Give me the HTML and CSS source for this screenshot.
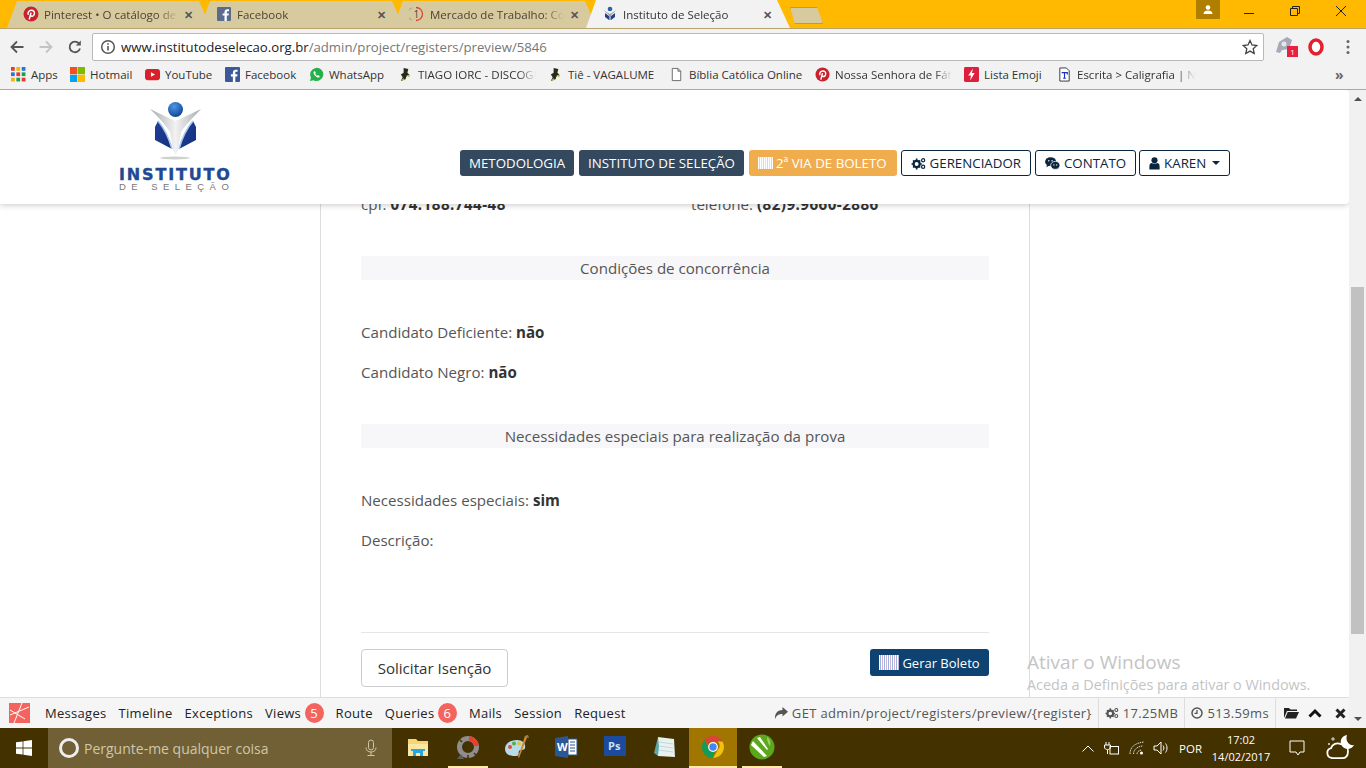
FILE: index.html
```html
<!DOCTYPE html>
<html lang="pt">
<head>
<meta charset="utf-8">
<title>Instituto de Seleção</title>
<link rel="stylesheet" href="styles.css">
</head>
<body>
<div class="tabstrip">
  <div class="tab">
    <svg class="fav" viewBox="0 0 16 16"><circle cx="8" cy="8" r="7.5" fill="#c8232c"/><path d="M6.2 13.5 8 6.6M5.3 8.7C4.4 6.4 6 4.2 8.3 4.2c2.200 0 3.400 1.500 3.100 3.400-.3 1.900-1.700 2.900-3 2.500-.7-.2-1-.7-1.100-1.100" fill="none" stroke="#fff" stroke-width="1.500"/></svg>
    <span class="tab-title">Pinterest • O catálogo de ideias</span><span class="tab-x">✕</span>
  </div>
  <div class="tab">
    <svg class="fav" viewBox="0 0 16 16"><rect x="1" y="1" width="14" height="14" rx="1" fill="#5c6a8c"/><path d="M10.800 15V9.600h1.800l.3-2.100h-2.100V6.200c0-.6.2-1 1-1h1.200V3.300c-.2 0-.9-.1-1.700-.1-1.700 0-2.800 1-2.800 2.900v1.400H6.600v2.100h1.900V15z" fill="#fff"/></svg>
    <span class="tab-title">Facebook</span><span class="tab-x">✕</span>
  </div>
  <div class="tab">
    <svg class="fav" viewBox="0 0 16 16"><path d="M7 1.500a6.500 6.500 0 0 1 0 13" fill="none" stroke="#d9472b" stroke-width="1.300"/><path d="M3 1.800A6.500 6.500 0 0 0 3 14" fill="none" stroke="#b9ac85" stroke-width="1.300"/><text x="4.500" y="12" class="fav-num">1</text></svg>
    <span class="tab-title">Mercado de Trabalho: Concursos</span><span class="tab-x">✕</span>
  </div>
  <div class="tab tab-active">
    <svg class="fav" viewBox="0 0 16 16"><circle cx="8" cy="3" r="2.300" fill="#2a62a8"/><path d="M1.500 4 8 8l6.500-4L9 9v5H7V9z" fill="#9aa0a8"/><path d="M3 7l4 3v4L3 11zM13 7l-4 3v4l4-3z" fill="#24408f"/></svg>
    <span class="tab-title">Instituto de Seleção</span><span class="tab-x">✕</span>
  </div>
  <div class="newtab"></div>
  <div class="winctl">
    <div class="profile"><svg viewBox="0 0 12 12" width="12" height="12"><circle cx="6" cy="3.500" r="2.300" fill="#fff"/><path d="M1.500 10c0-2.500 2-3.500 4.500-3.500s4.500 1 4.500 3.500z" fill="#fff"/></svg></div>
    <svg class="wc wc-min" viewBox="0 0 46 20"><path d="M18 13.500h10" stroke="#222" fill="none"/></svg>
    <svg class="wc" viewBox="0 0 46 20"><path d="M18.500 8.500h7v7h-7zM20.500 8.500v-2h7v7h-2" stroke="#222" fill="none"/></svg>
    <svg class="wc" viewBox="0 0 46 20"><path d="M18 6l10 10M28 6 18 16" stroke="#222" fill="none"/></svg>
  </div>
</div>

<div class="toolbar">
  <svg class="tool" viewBox="0 0 16 16"><path d="M14.500 8H2.500M8 2.500 2.500 8 8 13.500" fill="none" stroke="#555" stroke-width="1.800"/></svg>
  <svg class="tool" viewBox="0 0 16 16"><path d="M1.500 8h12M8 2.500 13.500 8 8 13.500" fill="none" stroke="#c4c4c4" stroke-width="1.800"/></svg>
  <svg class="tool" viewBox="0 0 16 16"><path d="M13 9.500A5.300 5.300 0 1 1 12 4.500" fill="none" stroke="#555" stroke-width="1.800"/><path d="M13.800 1.500v5h-5z" fill="#555"/></svg>
  <div class="omnibox">
    <svg class="info" viewBox="0 0 16 16"><circle cx="8" cy="8" r="6.300" fill="none" stroke="#555" stroke-width="1.500"/><path d="M8 7v4.500M8 4.300v1.500" stroke="#555" stroke-width="1.600"/></svg>
    <span class="url">www.institutodeselecao.org.br<span class="url-path">/admin/project/registers/preview/5846</span></span>
    <svg class="star" viewBox="0 0 16 16"><path d="M8 1.500l2 4.500 4.800.5-3.600 3.200 1 4.800L8 12.100l-4.200 2.400 1-4.800L1.200 6.500 6 6z" fill="none" stroke="#444" stroke-width="1.300"/></svg>
  </div>
  <div class="ext">
    <svg class="ext-icon" viewBox="0 0 18 18"><path d="M1 16 4 6l8-5 5 3-3 9-7 1-2 3z" fill="#a5a9b8"/><circle cx="9" cy="8" r="2.500" fill="#e6e6ea"/></svg>
    <span class="ext-badge">1</span>
  </div>
  <svg class="opera" viewBox="0 0 16 18"><ellipse cx="8" cy="9" rx="6" ry="7" fill="#fff" stroke="#e3202e" stroke-width="3.500"/></svg>
  <svg class="dots" viewBox="0 0 4 16"><circle cx="2" cy="2.500" r="1.500" fill="#666"/><circle cx="2" cy="8" r="1.500" fill="#666"/><circle cx="2" cy="13.500" r="1.500" fill="#666"/></svg>
</div>

<div class="bookmarks">
  <div class="bm"><svg class="bm-i" viewBox="0 0 14 14"><g><rect width="3.500" height="3.500" fill="#e33b2e"/><rect x="5" width="3.500" height="3.500" fill="#f5b400"/><rect x="10" width="3.500" height="3.500" fill="#2a75d8"/><rect y="5" width="3.500" height="3.500" fill="#2a75d8"/><rect x="5" y="5" width="3.500" height="3.500" fill="#e33b2e"/><rect x="10" y="5" width="3.500" height="3.500" fill="#1e9e50"/><rect y="10" width="3.500" height="3.500" fill="#f5b400"/><rect x="5" y="10" width="3.500" height="3.500" fill="#1e9e50"/><rect x="10" y="10" width="3.500" height="3.500" fill="#e33b2e"/></g></svg><span>Apps</span></div>
  <div class="bm"><svg class="bm-i" viewBox="0 0 16 16"><rect width="7.700" height="7.700" fill="#f25022"/><rect x="8.300" width="7.700" height="7.700" fill="#7fba00"/><rect y="8.300" width="7.700" height="7.700" fill="#00a4ef"/><rect x="8.300" y="8.300" width="7.700" height="7.700" fill="#ffb900"/></svg><span>Hotmail</span></div>
  <div class="bm"><svg class="bm-i" viewBox="0 0 16 16"><rect y="2" width="16" height="12" rx="3" fill="#d9202a"/><path d="M6.300 5.500v5l4.400-2.500z" fill="#fff"/></svg><span>YouTube</span></div>
  <div class="bm"><svg class="bm-i" viewBox="0 0 16 16"><rect width="16" height="16" rx="1" fill="#3b5998"/><path d="M11 16v-6h2l.3-2.400H11V6.200c0-.7.2-1.100 1.100-1.100h1.300V3c-.2 0-1-.1-1.900-.1-1.900 0-3.100 1.100-3.100 3.200v1.500H6.300V10h2.100v6z" fill="#fff"/></svg><span>Facebook</span></div>
  <div class="bm"><svg class="bm-i" viewBox="0 0 16 16"><path d="M1 15l1.100-3.800A7 7 0 1 1 4.900 14z" fill="#25b14a"/><path d="M5.500 4.500c-1 1 -.8 2.700.8 4.500s3.500 2.800 4.700 1.800l.5-1-2-1.200-.8.700c-.8-.3-1.700-1.200-2.100-2.100l.7-.8-1-2z" fill="#fff"/></svg><span>WhatsApp</span></div>
  <div class="bm bm-cut"><svg class="bm-i" viewBox="0 0 16 16"><path d="M6 1l5 1-1 4 2 2-3 2-1 3-5 2 2-4-2-3 3-2z" fill="#2a2a18"/><path d="M3 14l3-2 1 2z" fill="#b7c21f"/><path d="M9 9l4-1-1 3z" fill="#b7c21f"/></svg><span>TIAGO IORC - DISCOGRAFIA</span></div>
  <div class="bm"><svg class="bm-i" viewBox="0 0 16 16"><path d="M6 1l5 1-1 4 2 2-3 2-1 3-5 2 2-4-2-3 3-2z" fill="#2a2a18"/><path d="M3 14l3-2 1 2z" fill="#b7c21f"/><path d="M9 9l4-1-1 3z" fill="#b7c21f"/></svg><span>Tiê - VAGALUME</span></div>
  <div class="bm"><svg class="bm-i" viewBox="0 0 16 16"><path d="M3.500 1.500h6l3 3v10h-9zM9.500 1.500v3h3" fill="#fff" stroke="#666"/></svg><span>Bíblia Católica Online</span></div>
  <div class="bm bm-cut"><svg class="bm-i" viewBox="0 0 16 16"><circle cx="8" cy="8" r="7.500" fill="#c8232c"/><path d="M6.200 13.500 8 6.600M5.300 8.700C4.400 6.400 6 4.200 8.300 4.200c2.200 0 3.400 1.500 3.100 3.400-.3 1.900-1.700 2.900-3 2.500-.7-.2-1-.7-1.100-1.100" fill="none" stroke="#fff" stroke-width="1.500"/></svg><span>Nossa Senhora de Fátima</span></div>
  <div class="bm"><svg class="bm-i" viewBox="0 0 16 16"><rect width="16" height="16" rx="1.500" fill="#dc1f3c"/><path d="M9.500 1.500 4.500 9h3l-1 5.500L11.500 6.500h-3z" fill="#fff"/></svg><span>Lista Emoji</span></div>
  <div class="bm bm-cut"><svg class="bm-i" viewBox="0 0 16 16"><path d="M3 1h7l3 3v11H3z" fill="#fff" stroke="#333"/><path d="M5 6h6v2M8 6v6M6.500 12h3" fill="none" stroke="#1b2fc4" stroke-width="1.200"/></svg><span>Escrita &gt; Caligrafia | Novos Textos</span></div>
  <span class="bm-more">»</span>
</div>

<div class="frame">
  <div class="viewport">
    <div class="page">
      <header class="site-header">
        <a class="logo">
          <svg class="logo-mark" viewBox="0 0 54 66">
            <defs>
              <linearGradient id="wing" x1="0" y1="0" x2="1" y2="0"><stop offset="0" stop-color="#a9adb1"/><stop offset=".5" stop-color="#f2f2f2"/><stop offset="1" stop-color="#a9adb1"/></linearGradient>
              <radialGradient id="ball" cx=".4" cy=".3" r=".8"><stop offset="0" stop-color="#4d97e6"/><stop offset="1" stop-color="#0b3a8c"/></radialGradient>
              <linearGradient id="book" x1="0" y1="0" x2="1" y2="1"><stop offset="0" stop-color="#1f3f9a"/><stop offset="1" stop-color="#16307a"/></linearGradient>
            </defs>
            <path d="M6 27 9 21C15 28 20 38 23 49L6 40z" fill="url(#book)"/>
            <path d="M47 27 44 21C38 28 33 38 30 49L47 40z" fill="url(#book)"/>
            <path d="M9 21C15 28 20 38 23 49" fill="none" stroke="#a9c8ee" stroke-width="1.600"/>
            <path d="M44 21C38 28 33 38 30 49" fill="none" stroke="#a9c8ee" stroke-width="1.600"/>
            <path d="M1 9 20 18l6.500 3 6.500-3L52 9C44 18 37 24 32 32L29 50l-2.500 5-2.500-5-3-18C16 24 9 17 1 9z" fill="url(#wing)"/>
            <circle cx="26.500" cy="9.500" r="7.500" fill="url(#ball)"/>
            <ellipse cx="26" cy="58" rx="15" ry="1.500" fill="#d0d0d0"/>
          </svg>
          <span class="logo-title">INSTITUTO</span>
          <span class="logo-sub">DE SELEÇÃO</span>
        </a>
        <nav class="nav">
          <a class="btn btn-navy">METODOLOGIA</a>
          <a class="btn btn-navy">INSTITUTO DE SELEÇÃO</a>
          <a class="btn btn-orange"><span class="barcode"></span>2ª VIA DE BOLETO</a>
          <a class="btn btn-line">
            <svg class="ic" viewBox="0 0 16 14"><circle cx="6" cy="7.500" r="3.300" fill="none" stroke="#0a2540" stroke-width="2.400"/><path d="M6 1.500v2M6 11.500v2M.5 7.500h2M9.500 7.500h2M2.200 3.700l1.400 1.400M8.400 9.900l1.400 1.400M2.200 11.300l1.400-1.400M8.400 5.100l1.400-1.400" stroke="#0a2540" stroke-width="1.800"/><circle cx="13" cy="3.500" r="1.700" fill="none" stroke="#0a2540" stroke-width="1.300"/><circle cx="13" cy="10.500" r="1.700" fill="none" stroke="#0a2540" stroke-width="1.300"/></svg>GERENCIADOR</a>
          <a class="btn btn-line">
            <svg class="ic" viewBox="0 0 16 14"><ellipse cx="6" cy="5" rx="6" ry="4.700" fill="#0a2540"/><path d="M2 8 1.500 11 5 9z" fill="#0a2540"/><ellipse cx="11" cy="9" rx="5" ry="4.300" fill="#0a2540" stroke="#fff" stroke-width=".8"/><circle cx="4" cy="4" r=".8" fill="#fff"/><circle cx="7.500" cy="4" r=".8" fill="#fff"/><circle cx="9.500" cy="8.500" r=".7" fill="#fff"/><circle cx="12.500" cy="8.500" r=".7" fill="#fff"/></svg>CONTATO</a>
          <a class="btn btn-line btn-user">
            <svg class="ic ic-user" viewBox="0 0 11 14"><circle cx="5.500" cy="3.500" r="3.300" fill="#0a2540"/><path d="M0 13.500V10c0-2.500 1.500-3.500 2.500-3.500 1 .8 5 .8 6 0 1 0 2.500 1 2.500 3.500v3.500z" fill="#0a2540"/></svg>KAREN<span class="caret"></span></a>
        </nav>
      </header>

      <main class="sheet">
        <div class="pair">
          <p class="line">cpf: <b>074.188.744-48</b></p>
          <p class="line">telefone: <b>(82)9.9660-2886</b></p>
        </div>
        <h4 class="band band-first">Condições de concorrência</h4>
        <p class="line">Candidato Deficiente: <b>não</b></p>
        <p class="line">Candidato Negro: <b>não</b></p>
        <h4 class="band">Necessidades especiais para realização da prova</h4>
        <p class="line">Necessidades especiais: <b>sim</b></p>
        <p class="line">Descrição:</p>
        <div class="actions">
          <a class="btn-plain">Solicitar Isenção</a>
          <a class="btn-gerar"><span class="barcode barcode-b"></span>Gerar Boleto</a>
        </div>
      </main>

      <div class="watermark">
        <div class="wm-a">Ativar o Windows</div>
        <div class="wm-b">Aceda a Definições para ativar o Windows.</div>
      </div>
    </div>

    <div class="debugbar">
      <svg class="dbg-logo" viewBox="0 0 22 22"><rect x="0" y="1" width="21" height="20" fill="#f4645f"/><path d="M1 13 20 5M5 21 13 1M1 8l15 9" stroke="#fff" stroke-width="1" fill="none"/></svg>
      <div class="dbg-tabs">
        <span>Messages</span><span>Timeline</span><span>Exceptions</span>
        <span>Views<i class="count">5</i></span><span>Route</span>
        <span>Queries<i class="count">6</i></span><span>Mails</span><span>Session</span><span>Request</span>
      </div>
      <div class="dbg-right">
        <span class="dbg-item dbg-req"><svg class="dbg-i" viewBox="0 0 14 12"><path d="M8.500 0 14 4.800 8.500 9.500V7C5 7 2.500 8 1 12c-.5-5 2-8.800 7.500-9z" fill="#555"/></svg>GET admin/project/registers/preview/{register}</span>
        <span class="dbg-item"><svg class="dbg-i" viewBox="0 0 16 14"><circle cx="6" cy="7.500" r="3.300" fill="none" stroke="#555" stroke-width="2.400"/><path d="M6 1.500v2M6 11.500v2M.5 7.500h2M9.500 7.500h2M2.200 3.700l1.400 1.400M8.400 9.900l1.400 1.400M2.200 11.300l1.400-1.400M8.400 5.100l1.400-1.400" stroke="#555" stroke-width="1.800"/><circle cx="13" cy="3.500" r="1.700" fill="none" stroke="#555" stroke-width="1.300"/><circle cx="13" cy="10.500" r="1.700" fill="none" stroke="#555" stroke-width="1.300"/></svg>17.25MB</span>
        <span class="dbg-item"><svg class="dbg-i dbg-i-c" viewBox="0 0 12 12"><circle cx="6" cy="6" r="5" fill="none" stroke="#555" stroke-width="1.500"/><path d="M6 3v3.300H3.500" fill="none" stroke="#555" stroke-width="1.300"/></svg>513.59ms</span>
        <span class="dbg-ctrl">
          <svg class="ctl-f" viewBox="0 0 15 12"><path d="M0 1h5l1.500 1.500H13V4H3L0 11z" fill="#222"/><path d="M3.700 5H15l-3 6.500H1z" fill="#222"/></svg>
          <svg class="ctl-c" viewBox="0 0 14 10"><path d="M1.500 8.500 7 3l5.500 5.500" fill="none" stroke="#111" stroke-width="3"/></svg>
          <svg class="ctl-x" viewBox="0 0 11 11"><path d="M1.500 1.500l8 8M9.500 1.500l-8 8" fill="none" stroke="#222" stroke-width="3"/></svg>
        </span>
      </div>
    </div>
  </div>

  <div class="scrollbar">
    <span class="arr arr-up"></span>
    <div class="thumb"></div>
    <span class="arr arr-down"></span>
  </div>
</div>

<footer class="taskbar">
  <div class="start"><svg viewBox="0 0 16 16" width="16" height="16"><path d="M0 2.300 6.600 1.400v6.200H0zM7.400 1.300 16 0v7.600H7.400zM0 8.400h6.600v6.200L0 13.700zM7.400 8.400H16V16l-8.600-1.200z" fill="#fff"/></svg></div>
  <div class="search">
    <span class="cortana"></span>
    <span class="search-text">Pergunte-me qualquer coisa</span>
    <svg class="mic" viewBox="0 0 12 18"><rect x="3.500" y="1" width="5" height="10" rx="2.500" fill="none" stroke="#cfc6ad"/><path d="M1 8.500c0 3 2 4.500 5 4.500s5-1.500 5-4.500M6 13v3.500M2.500 16.500h7" fill="none" stroke="#cfc6ad"/></svg>
  </div>
  <div class="apps">
    <div class="app"><svg viewBox="0 0 24 24" width="24" height="24"><path d="M2 4h8l2 2h10v15H2z" fill="#f6d576"/><path d="M2 9h20v12H2z" fill="#fbe6a2"/><path d="M7 15h10v6h-3v-3h-4v3H7z" fill="#2aa6de"/><path d="M5 14h14v2H5z" fill="#2aa6de"/></svg></div>
    <div class="app app-on"><svg viewBox="0 0 26 26" width="26" height="26"><circle cx="13" cy="13" r="8.500" fill="none" stroke="#8e8e8e" stroke-width="5"/><path d="M14 4.600A8.500 8.500 0 0 1 21.500 12" fill="none" stroke="#e8412a" stroke-width="5"/><path d="M6 20 2 25h7z" fill="#5e5e5e"/><path d="M7 8 5 6M19 19l2 2M13 24v-3" stroke="#443100" stroke-width="1.500"/></svg></div>
    <div class="app"><svg viewBox="0 0 26 26" width="26" height="26"><path d="M1 15C1 9 7 6 13 6c6 0 9 4 8 8-1 3-5 1-6 3-1 3 1 5-4 5-6 0-10-2-10-7z" fill="#b9dbe8"/><circle cx="6" cy="13" r="2" fill="#e34a4a"/><circle cx="10" cy="9.500" r="2" fill="#4fb04f"/><circle cx="15" cy="9.500" r="2" fill="#e8c23f"/><path d="M24 1 15 24l-1-1L21 2z" fill="#d08a2e"/><path d="M20 3l4-2 1 3z" fill="#a07a50"/></svg></div>
    <div class="app"><svg viewBox="0 0 24 24" width="24" height="24"><path d="M14 1 1 3v18l13 2z" fill="#2b5797"/><rect x="14" y="4" width="9" height="16" fill="#fff" stroke="#2b5797"/><path d="M16 7h5M16 10h5M16 13h5M16 16h5" stroke="#2b5797"/><text x="3" y="16" class="word-w">W</text></svg></div>
    <div class="app"><svg viewBox="0 0 22 22" width="22" height="22"><rect width="22" height="20" fill="#1c4a9c"/><text x="4" y="14" class="ps">Ps</text></svg></div>
    <div class="app"><svg viewBox="0 0 24 24" width="24" height="24"><path d="M6 2 22 4l1 18-17-1z" fill="#e8f2ee"/><path d="M6 2 2 18l4 3 1-10z" fill="#5aa7a5"/><path d="M7 7l14 2M7 11l14 2M7 15l14 2" stroke="#bcd" stroke-width=".8"/></svg></div>
    <div class="app app-chrome"><svg viewBox="0 0 24 24" width="24" height="24"><path d="M12 1a11 11 0 0 1 9.500 5.500H12a5.500 5.500 0 0 0-5 3L3.500 5A11 11 0 0 1 12 1z" fill="#db4437"/><path d="M21.500 6.500A11 11 0 0 1 12 23l4.700-8a5.500 5.500 0 0 0 0-8.500z" fill="#f4c20d"/><path d="M3.500 5 7.800 14a5.500 5.500 0 0 0 5.500 3.300L12 23A11 11 0 0 1 3.500 5z" fill="#0f9d58"/><circle cx="12" cy="12" r="4.300" fill="#4285f4" stroke="#fff" stroke-width="1.200"/></svg></div>
    <div class="app app-on app-last"><svg viewBox="0 0 26 26" width="26" height="26"><circle cx="13" cy="13" r="12.500" fill="#5ca71b"/><path d="M4 7 18 22l-3 1L2 11zM8 4l10 12 1-1L11 3z" fill="#fff"/><path d="M18 3c3 2 4 6 3 9-2-2-3-6-3-9z" fill="#9fd068"/></svg></div>
  </div>
  <div class="tray">
    <svg class="t-caret" viewBox="0 0 12 7"><path d="M.5 6.500 6 1l5.500 5.500" fill="none" stroke="#fff"/></svg>
    <svg class="t-batt" viewBox="0 0 16 14"><path d="M3 1v3M6 1v3M1.500 4h6v2c0 2-1.500 2.500-3 2.500S1.500 8 1.500 6zM4.500 9v4" fill="none" stroke="#fff"/><rect x="7" y="5.500" width="8.500" height="7.500" fill="none" stroke="#fff"/></svg>
    <svg class="t-wifi" viewBox="0 0 16 14"><path d="M1 13C1 6 6 2 15 1M4.500 13c0-4 3.500-7.500 9-8M8 13c0-2 2-4 5-4" fill="none" stroke="#ddd" stroke-dasharray="1.500 .8"/><circle cx="12.500" cy="12" r="1.500" fill="#fff"/></svg>
    <svg class="t-vol" viewBox="0 0 16 14"><path d="M1 5h3l4-4v12L4 9H1zM10 4.500c1.200 1.500 1.200 3.500 0 5M12.500 2.500c2 2.500 2 6.500 0 9" fill="none" stroke="#fff"/></svg>
    <span class="t-lang">POR</span>
    <div class="t-clock"><span>17:02</span><span>14/02/2017</span></div>
    <svg class="t-note" viewBox="0 0 16 16"><path d="M1 1h14v11h-4l-2 3-2-3H1z" fill="none" stroke="#fff"/></svg>
    <svg class="t-weather" viewBox="0 0 30 30"><path d="M7 25a5 5 0 0 1-1-9.800c1-4 6-6 10-4 3 0 7 2 7 7s-2 7-6 7z" fill="none" stroke="#fff" stroke-width="1.800"/><path d="M22 2a7 7 0 1 0 7 10c-5 1-9-4-7-10z" fill="#fff"/><path d="M8 4v4M6 6h4M4 10v2M3 11h2" stroke="#fff" stroke-width=".8"/></svg>
  </div>
</footer>
</body>
</html>
```

FILE: styles.css
```css
* { box-sizing: border-box; }
html, body { height: 100%; }
body {
  margin: 0;
  width: 1366px;
  height: 768px;
  overflow: hidden;
  display: flex;
  flex-direction: column;
  font-family: "Open Sans", "Noto Sans", sans-serif;
  color: #333;
  background: #fff;
}

/* tab strip */
.tabstrip {
  height: 29px;
  flex: none;
  display: flex;
  padding-left: 7px;
  background: #ffb900;
  border-bottom: 1px solid #b9a36a;
}
.tab {
  width: 207px;
  height: 28px;
  margin-right: -14px;
  padding: 0 21px 0 16px;
  display: flex;
  align-items: center;
  background: #d8ca9f;
  clip-path: polygon(0 100%, 10px 1px, 192px 1px, 204px 100%);
  font-size: 11.5px;
  color: #4b4335;
}
.tab-active {
  background: #f2f2f2;
  color: #333;
  clip-path: polygon(0 100%, 10px 0, 191px 0, 204px 100%);
}
.fav { width: 16px; height: 16px; flex: none; margin-right: 5px; }
.fav-num { font-size: 10px; fill: #444; }
.tab-title {
  flex: 1;
  white-space: nowrap;
  overflow: hidden;
  -webkit-mask-image: linear-gradient(to right, #000 85%, transparent);
  mask-image: linear-gradient(to right, #000 85%, transparent);
}
.tab-x { font-size: 11px; color: #555; font-weight: 700; margin-left: 6px; }
.newtab {
  width: 33px;
  height: 17px;
  margin: 7px 0 0 11px;
  background: #d8ca9f;
  border: 1px solid #b39b5c;
  clip-path: polygon(0 0, 27px 0, 33px 100%, 5px 100%);
}
.winctl { margin-left: auto; display: flex; align-items: flex-start; margin-right: 2px; }
.profile {
  width: 24px;
  height: 19px;
  margin-right: 8px;
  background: #b07f00;
  display: flex;
  align-items: center;
  justify-content: center;
}
.wc { width: 46px; height: 20px; }
.wc-min { margin-left: -2px; }

/* toolbar */
.toolbar {
  height: 32px;
  flex: none;
  display: flex;
  align-items: center;
  padding: 4px 0 0 9px;
  background: #f2f2f2;
}
.tool { width: 16px; height: 16px; margin-right: 13px; flex: none; }
.omnibox {
  width: 1172px;
  height: 28px;
  margin-left: -4px;
  display: flex;
  align-items: center;
  padding: 0 5px 0 7px;
  background: #fff;
  border: 1px solid #b9b9b9;
  border-radius: 2px;
}
.info { width: 16px; height: 16px; margin-right: 5px; flex: none; }
.url { font-size: 13.2px; color: #222; flex: 1; white-space: nowrap; }
.url-path { color: #777; }
.star { width: 16px; height: 16px; flex: none; }
.ext { width: 34px; height: 24px; margin-left: 2px; position: relative; flex: none; }
.ext-icon { width: 20px; height: 18px; position: absolute; left: 8px; top: 1px; }
.ext-badge {
  position: absolute;
  left: 21px;
  top: 11px;
  width: 11px;
  height: 11px;
  background: #e8213e;
  color: #fff;
  font-size: 8px;
  line-height: 11px;
  text-align: center;
}
.opera { width: 16px; height: 18px; margin-left: 8px; flex: none; }
.dots { width: 4px; height: 16px; margin-left: 22px; flex: none; }

/* bookmarks */
.bookmarks {
  height: 29px;
  flex: none;
  display: grid;
  grid-template-columns: 59px 75px 80px 84px 89px 150px 121px 146px 149px 93px 150px 128px 1fr;
  align-items: center;
  padding-left: 11px;
  padding-bottom: 1px;
  background: #f2f2f2;
  border-bottom: 1px solid #a9a9a9;
  font-size: 11.5px;
  color: #333;
}
.bm { display: flex; align-items: center; gap: 5px; white-space: nowrap; overflow: hidden; padding-right: 12px; }
.bm-i { width: 15px; height: 15px; flex: none; }
.bm-cut span {
  overflow: hidden;
  -webkit-mask-image: linear-gradient(to right, #000 85%, transparent);
  mask-image: linear-gradient(to right, #000 85%, transparent);
}
.bm-more { grid-column: 13; font-size: 14px; color: #666; font-weight: 700; }

/* page frame */
.frame { flex: 1; min-height: 0; display: flex; }
.viewport { flex: 1; min-width: 0; display: flex; flex-direction: column; }
.page { flex: 1; min-height: 0; position: relative; overflow: hidden; }

.site-header {
  position: absolute;
  left: 0;
  right: 0;
  top: 0;
  height: 114px;
  background: #fff;
  border-radius: 0 4px 4px 0;
  box-shadow: 0 1px 6px rgba(0, 0, 0, .22);
  display: flex;
  padding-left: 119px;
}
.logo { width: 112px; padding-top: 10px; display: flex; flex-direction: column; align-items: flex-start; }
.logo-mark { width: 54px; height: 66px; margin-left: 30px; display: block; flex: none; }
.logo-title {
  font-family: "DejaVu Sans", sans-serif;
  font-weight: 700;
  font-size: 16px;
  line-height: 13px;
  letter-spacing: 1.85px;
  margin-top: 2px;
  color: #1f4a93;
  white-space: nowrap;
  -webkit-text-stroke: .4px #1f4a93;
}
.logo-sub {
  font-family: "Liberation Sans", sans-serif;
  font-size: 9.5px;
  line-height: 11px;
  letter-spacing: 5.45px;
  color: #777;
  white-space: nowrap;
}
.nav { display: flex; gap: 5px; margin: 60px 0 0 229px; align-items: flex-start; }
.btn {
  height: 26px;
  padding: 0 9px;
  display: flex;
  align-items: center;
  font-size: 13.3px;
  border-radius: 3px;
  white-space: nowrap;
}
.btn-navy { background: #34495e; color: #fff; }
.btn-orange { background: #f0ad4e; color: #fff; padding-right: 10px; }
.btn-line { border: 1px solid #0a2540; color: #0a2540; margin-left: -1px; }
.btn-user { margin-left: -2px; }
.barcode {
  width: 15px;
  height: 12px;
  margin-right: 3px;
  background: repeating-linear-gradient(to right, #fff 0 1px, rgba(255,255,255,.45) 1px 2px, #fff 2px 3px, rgba(255,255,255,.6) 3px 4px);
}
.ic { width: 15px; height: 13px; margin-right: 4px; flex: none; }
.ic-user { width: 11px; }
.caret {
  margin-left: 6px;
  border-top: 4px solid #0a2540;
  border-left: 4px solid transparent;
  border-right: 4px solid transparent;
}

/* sheet */
.sheet {
  margin-left: 320px;
  width: 710px;
  height: 100%;
  padding: 105px 40px 0;
  border-left: 1px solid #ddd;
  border-right: 1px solid #ddd;
}
.pair { display: grid; grid-template-columns: 330px 1fr; }
.pair b { letter-spacing: .5px; }
.line { margin: 0 0 20px; height: 20px; font-size: 15.1px; line-height: 18px; color: #555; }
.line b { color: #333; font-weight: 700; }
.band {
  margin: 41px 0 43px;
  height: 24px;
  line-height: 24px;
  text-align: center;
  font-size: 15.1px;
  font-weight: 400;
  color: #555;
  background: #f7f7f9;
}
.band-first { margin-top: 21px; }
.actions {
  margin-top: 81px;
  padding-top: 16px;
  border-top: 1px solid #e5e5e5;
  display: flex;
  justify-content: space-between;
  align-items: flex-start;
}
.btn-plain {
  width: 147px;
  height: 38px;
  display: flex;
  align-items: center;
  justify-content: center;
  border: 1px solid #ccc;
  border-radius: 4px;
  font-size: 15.1px;
  color: #333;
}
.btn-gerar {
  width: 119px;
  height: 27px;
  display: flex;
  align-items: center;
  justify-content: center;
  background: #0e4270;
  color: #fff;
  border-radius: 3px;
  font-size: 13px;
}
.barcode-b {
  width: 20px;
  height: 15px;
  background: repeating-linear-gradient(to right, #fff 0 1px, #9db4d8 1px 2px, #fff 2px 3px, #c9b6dc 3px 4px);
}
.watermark { position: absolute; left: 1027px; top: 559px; color: #c4c4c4; white-space: nowrap; }
.wm-a { font-size: 19px; line-height: 26px; }
.wm-b { font-size: 14.4px; line-height: 20px; }

/* debug bar */
.debugbar {
  height: 31px;
  flex: none;
  display: flex;
  align-items: center;
  padding-left: 9px;
  background: #f5f5f5;
  border-top: 1px solid #ddd;
  font-size: 13px;
  letter-spacing: .3px;
  color: #222;
}
.dbg-logo { width: 22px; height: 22px; flex: none; }
.dbg-tabs { display: flex; gap: 12px; margin-left: 14px; align-items: center; }
.dbg-tabs span { display: flex; align-items: center; white-space: nowrap; }
.count {
  width: 19px;
  height: 20px;
  margin-left: 3.5px;
  border-radius: 50%;
  background: #f4645f;
  color: #fff;
  font-style: normal;
  text-align: center;
  line-height: 20px;
}
.dbg-right { margin-left: auto; display: flex; align-items: stretch; height: 100%; color: #555; letter-spacing: .35px; }
.dbg-item {
  display: flex;
  align-items: center;
  padding: 0 6px;
  border-right: 1px solid #ddd;
  white-space: nowrap;
}
.dbg-i { width: 14px; height: 12px; margin-right: 4px; flex: none; }
.dbg-i-c { width: 12px; }
.dbg-ctrl { display: flex; align-items: center; padding-left: 8px; width: 73px; gap: 9px; }
.ctl-f { width: 15px; height: 12px; }
.ctl-c { width: 14px; height: 10px; }
.ctl-x { width: 11px; height: 11px; margin-left: 4px; }

/* scrollbar */
.scrollbar {
  width: 17px;
  flex: none;
  display: flex;
  flex-direction: column;
  align-items: center;
  background: #f1f1f1;
  padding: 7px 0;
}
.arr { width: 0; height: 0; border-left: 4px solid transparent; border-right: 4px solid transparent; flex: none; }
.arr-up { border-bottom: 4px solid #505050; }
.arr-down { border-top: 4px solid #505050; margin-top: auto; }
.thumb { width: 13px; height: 347px; margin-top: 186px; background: #c1c1c1; flex: none; }

/* taskbar */
.taskbar {
  height: 40px;
  flex: none;
  display: flex;
  align-items: stretch;
  background: #443100;
  color: #fff;
}
.start { width: 48px; display: flex; align-items: center; justify-content: center; }
.search {
  width: 344px;
  display: flex;
  align-items: center;
  padding-left: 11px;
  background: #716035;
  color: #cfc6ad;
  font-size: 14px;
}
.cortana { width: 20px; height: 20px; border: 3px solid #eee; border-radius: 50%; margin-right: 5px; flex: none; }
.search-text { flex: 1; white-space: nowrap; }
.mic { width: 12px; height: 18px; margin-right: 15px; flex: none; }
.apps { display: flex; margin-left: 2px; }
.app {
  width: 48px;
  margin-right: 1px;
  display: flex;
  align-items: center;
  justify-content: center;
  border-bottom: 2px solid transparent;
}
.app-on { border-bottom-color: #ffe9a8; width: 40px; margin: 0 5px; }
.app-chrome { background: #a07500; border-bottom-color: #ffe9a8; margin-right: 0; }
.app-last { margin-left: 5px; }
.word-w { font-size: 11px; font-weight: 700; fill: #fff; }
.ps { font-size: 11px; font-weight: 700; fill: #cfe0f5; }
.tray { margin-left: auto; display: flex; align-items: center; font-size: 11.5px; }
.t-caret { width: 12px; height: 7px; margin-right: 9px; }
.t-batt { width: 16px; height: 14px; margin-right: 10px; }
.t-wifi { width: 16px; height: 14px; margin-right: 8px; }
.t-vol { width: 16px; height: 14px; margin-right: 10px; }
.t-lang { margin-right: 10px; }
.t-clock { width: 58px; display: flex; flex-direction: column; align-items: center; line-height: 17px; font-size: 11px; margin-right: 19px; }
.t-note { width: 16px; height: 16px; margin-right: 20px; }
.t-weather { width: 30px; height: 30px; margin-right: 11px; }
```
